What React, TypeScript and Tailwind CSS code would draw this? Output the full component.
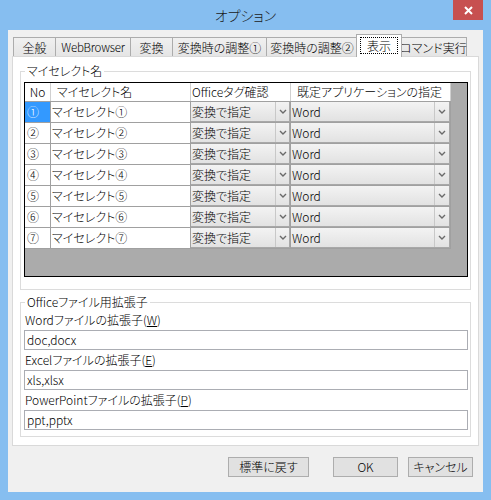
import React from "react";

const rows = ["①", "②", "③", "④", "⑤", "⑥", "⑦"];

function Chevron() {
  return (
    <svg width="8" height="5" viewBox="0 0 8 5">
      <path d="M1 1 L4 4 L7 1" fill="none" stroke="#6a6a6a" strokeWidth="1.4" />
    </svg>
  );
}

function Combo({ text, aw }: { text: string; aw: "o" | "a" }) {
  return (
    <div className="h-full flex border-r border-b border-[#A8A8A8] bg-gradient-to-b from-[#F3F3F3] to-[#E2E2E2]">
      <div className="flex-1 pl-[1px] leading-[19px] whitespace-nowrap overflow-hidden">{text}</div>
      <div
        className={
          aw === "o"
            ? "w-[14px] border-l border-[#C8C8C8] flex items-center justify-center"
            : "w-[15px] border-l border-[#C8C8C8] flex items-center justify-center"
        }
      >
        <Chevron />
      </div>
    </div>
  );
}

function Tab({ label, w }: { label: React.ReactNode; w: string }) {
  return (
    <div
      className={`${w} h-[19px] -ml-px first:ml-0 border border-b-0 border-[#ACACAC] bg-gradient-to-b from-[#F0F0F0] to-[#E5E5E5] flex items-center justify-center leading-[17px] whitespace-nowrap`}
    >
      {label}
    </div>
  );
}

function Field({ label, value }: { label: React.ReactNode; value: string }) {
  return (
    <div className="flex flex-col">
      <div className="h-[20px] flex items-center pl-[1px] leading-[16px]">{label}</div>
      <div className="h-[20px] border border-[#ABADB3] bg-white pl-[2px] leading-[18px]">{value}</div>
    </div>
  );
}

export default function App() {
  return (
    <div className="w-[491px] h-[500px] bg-[#86BEF0] flex flex-col font-['Noto_Sans_CJK_JP','Noto_Sans',sans-serif] font-light [font-feature-settings:'palt'] text-[12px] text-black">
      {/* title bar */}
      <div className="h-[30px] shrink-0 grid grid-cols-[1fr_auto_1fr] items-start">
        <div />
        <div className="h-[30px] flex items-center text-[14px] leading-[20px] text-[#1a1a1a]">オプション</div>
        <div className="flex justify-end pr-[8px]">
          <div className="w-[30px] h-[20px] bg-[#C75050] flex items-center justify-center">
            <svg width="9" height="9" viewBox="0 0 9 9">
              <path d="M1 1 L8 8 M8 1 L1 8" stroke="white" strokeWidth="2" />
            </svg>
          </div>
        </div>
      </div>

      {/* client area */}
      <div className="mx-[8px] h-[462px] shrink-0 bg-[#F0F0F0] flex flex-col">
        {/* tabs */}
        <div className="h-[26px] shrink-0 ml-[5px] flex items-end">
          <Tab label="全般" w="w-[43px]" />
          <Tab label={<span className="text-[11.5px] tracking-[-0.2px]">WebBrowser</span>} w="w-[76px]" />
          <Tab label="変換" w="w-[43px]" />
          <Tab label="変換時の調整①" w="w-[95px]" />
          <Tab label="変換時の調整②" w="w-[92px]" />
          <div className="relative z-10 w-[46px] h-[23px] -ml-[2px] -mb-px border border-b-0 border-[#ACACAC] bg-white flex items-start justify-center pt-[2px]">
            <div className="w-[38px] h-[17px] border border-dotted border-black flex items-center justify-center leading-[15px]">
              表示
            </div>
          </div>
          <div className="w-[67px] h-[19px] -ml-[2px] border border-b-0 border-[#ACACAC] bg-gradient-to-b from-[#F0F0F0] to-[#E5E5E5] flex items-center justify-center leading-[17px] whitespace-nowrap">
            コマンド実行
          </div>
        </div>

        {/* panel */}
        <div className="mx-[4px] h-[390px] shrink-0 border border-[#D9D9D9] bg-white px-[7px] pt-[7px]">
          <fieldset className="border border-[#DCDCDC] pl-[3px] pr-[2px] pt-[4px] pb-[12px]">
            <legend className="ml-[1px] px-[2px] leading-[14px]">マイセレクト名</legend>
            <div className="h-[195px] border border-black bg-[#ABABAB]">
              {/* header */}
              <div className="flex h-[19px] w-[426px] bg-white border-b border-[#A0A0A0]">
                <div className="w-[26px] border-r border-[#D0D0D0] flex items-center justify-center leading-[18px]">No</div>
                <div className="w-[140px] border-r border-[#D0D0D0] pl-[6px] leading-[18px]">マイセレクト名</div>
                <div className="w-[100px] border-r border-[#D0D0D0] pl-[1px] leading-[18px]">Officeタグ確認</div>
                <div className="w-[160px] border-r border-[#D0D0D0] pl-[6px] leading-[18px]">既定アプリケーションの指定</div>
              </div>
              {rows.map((n, i) => (
                <div key={n} className="flex h-[21px] w-[426px] bg-white border-b border-[#A0A0A0]">
                  <div
                    className={
                      i === 0
                        ? "w-[26px] border-r border-[#A0A0A0] bg-[#3399FF] text-white pl-[2px] leading-[20px]"
                        : "w-[26px] border-r border-[#A0A0A0] pl-[2px] leading-[20px]"
                    }
                  >
                    {n}
                  </div>
                  <div className="w-[140px] border-r border-[#A0A0A0] pl-[1px] leading-[20px]">マイセレクト{n}</div>
                  <div className="w-[100px] border-r border-[#A0A0A0]">
                    <Combo text="変換で指定" aw="o" />
                  </div>
                  <div className="w-[160px] border-r border-[#A0A0A0]">
                    <Combo text="Word" aw="a" />
                  </div>
                </div>
              ))}
            </div>
          </fieldset>

          <fieldset className="mt-[5px] border border-[#DCDCDC] pl-[3px] pr-[2px] pt-[1px] pb-[6px]">
            <legend className="ml-[1px] px-[2px] leading-[14px]">Officeファイル用拡張子</legend>
            <Field
              label={
                <span>
                  Wordファイルの拡張子(<span className="underline">W</span>)
                </span>
              }
              value="doc,docx"
            />
            <Field
              label={
                <span>
                  Excelファイルの拡張子(<span className="underline">E</span>)
                </span>
              }
              value="xls,xlsx"
            />
            <Field
              label={
                <span>
                  PowerPointファイルの拡張子(<span className="underline">P</span>)
                </span>
              }
              value="ppt,pptx"
            />
          </fieldset>
        </div>

        {/* buttons */}
        <div className="mt-[11px] pr-[10px] flex justify-end">
          <button className="w-[81px] h-[20px] border border-[#ADADAD] bg-[#E1E1E1] leading-[18px]">標準に戻す</button>
          <button className="ml-[24px] w-[65px] h-[20px] border border-[#ADADAD] bg-[#E1E1E1] leading-[18px]">OK</button>
          <button className="ml-[10px] w-[65px] h-[20px] border border-[#ADADAD] bg-[#E1E1E1] leading-[18px]">キャンセル</button>
        </div>
      </div>
    </div>
  );
}
